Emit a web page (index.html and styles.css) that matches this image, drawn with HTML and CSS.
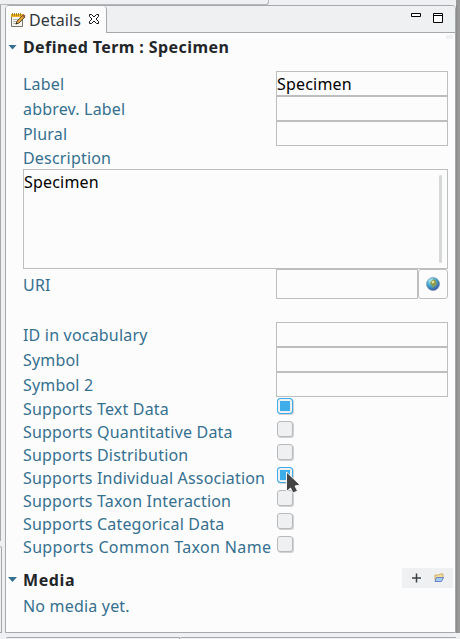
FILE: index.html
```html
<!DOCTYPE html>
<html lang="en">
<head>
<meta charset="utf-8">
<title>Details</title>
<link rel="stylesheet" href="styles.css">
</head>
<body>
<div class="workbench">
  <div class="top-edge"><span class="top-left"></span><span class="top-right"></span></div>
  <div class="middle">
    <div class="left-edge"><span class="edge-upper"></span><span class="edge-lower"></span></div>
    <section class="view">
      <header class="tabbar">
        <div class="tab">
          <svg class="tab-icon" width="16" height="16" viewBox="0 0 16 16">
            <path d="M1.500 3.500h11v11h-11z" fill="#f6f5ee" stroke="#77756c"/>
            <path d="M1 2h12v3H1z" fill="#efb51c"/>
            <path d="M2.500 1v3M4.500 1v3M6.500 1v3M8.500 1v3M10.500 1v3" stroke="#9a701c" stroke-width=".8"/>
            <path d="M3 7.500h7M3 9.500h5M3 11.500h3" stroke="#b9b9b5"/>
            <path d="M6 12l1-3 6-6 2 2-6 6z" fill="#dda63c" stroke="#54422c" stroke-width=".9"/>
            <path d="M12 3.500l1.500-1.500 2 2-1.500 1.500z" fill="#994c37"/>
            <path d="M5.500 12.500l1-2 1 1z" fill="#222"/>
          </svg>
          <span class="tab-title">Details</span>
          <svg class="tab-close" width="12" height="12" viewBox="0 0 12 12"><path d="M1.500 1.500h2l2.500 2.500 2.500-2.500h2v2L8 6l2.500 2.500v2h-2L6 8l-2.500 2.500h-2v-2L4 6 1.500 3.500z" fill="#fff" stroke="#16191b"/></svg>
        </div>
        <div class="window-buttons">
          <svg width="32" height="12" viewBox="0 0 32 12"><path d="M.5 1.500h9v3h-9zM22.500 1.500h9v9h-9zM22.500 3.500h9" fill="#fff" stroke="#000"/></svg>
        </div>
      </header>
      <main class="content">
        <span class="corner-mark"></span>
        <h2 class="section-title"><i class="twistie"></i>Defined Term : Specimen</h2>
        <form class="fields">
          <label class="row"><span>Label</span><span class="field">Specimen</span></label>
          <label class="row"><span>abbrev. Label</span><span class="field"></span></label>
          <label class="row"><span>Plural</span><span class="field"></span></label>
          <div class="description-label">Description</div>
          <div class="description">Specimen<span class="scrollbar"></span></div>
          <div class="row uri-row"><span>URI</span><span class="field"></span>
            <span class="globe-button"><svg width="14" height="14" viewBox="0 0 14 14">
              <defs><radialGradient id="sea" cx=".35" cy=".25" r=".8"><stop offset="0" stop-color="#b6f0f4"/><stop offset=".5" stop-color="#43a5cc"/><stop offset="1" stop-color="#3f4fa0"/></radialGradient></defs>
              <circle cx="7" cy="7" r="6.500" fill="url(#sea)" stroke="#5580a0" stroke-width=".5"/>
              <path d="M5 4l3-2 2 2 1 3-2 2-2 2-1-3-2-1z" fill="#8b9c50"/><path d="M5.500 4.500l2-1 1 2-2 1z" fill="#eee5a4"/>
            </svg></span>
          </div>
          <label class="row"><span>ID in vocabulary</span><span class="field"></span></label>
          <label class="row"><span>Symbol</span><span class="field"></span></label>
          <label class="row"><span>Symbol 2</span><span class="field"></span></label>
          <div class="check-row"><span>Supports Text Data</span><i class="check checked"></i></div>
          <div class="check-row"><span>Supports Quantitative Data</span><i class="check"></i></div>
          <div class="check-row"><span>Supports Distribution</span><i class="check"></i></div>
          <div class="check-row"><span>Supports Individual Association</span><i class="check checked"></i>
            <svg class="cursor" width="16" height="24" viewBox="0 0 16 24"><path d="M1.500 1v19.500l4-3.500 2.500 5 4.500-2-2.500-5 5-1z" fill="#434343" stroke="#f5f5f5" stroke-width="1"/></svg>
          </div>
          <div class="check-row"><span>Supports Taxon Interaction</span><i class="check"></i></div>
          <div class="check-row"><span>Supports Categorical Data</span><i class="check"></i></div>
          <div class="check-row"><span class="wide">Supports Common Taxon Name</span><i class="check"></i></div>
        </form>
        <div class="media-header">
          <h2 class="section-title">
            <i class="twistie"></i>Media</h2>
          <div class="media-tools">
            <svg width="51" height="20" viewBox="0 0 51 20">
              <path d="M10 10h9M14.500 5.500v9" stroke="#3c4043" stroke-width="1.500"/>
              <path d="M33 12V7h4l1-1h3v4" fill="#f5dfa0" stroke="#c59e51" stroke-width=".8"/>
              <path d="M34.500 9.500h7l-2 4h-6.500z" fill="#a5cdf2" stroke="#536fbd" stroke-width=".8"/>
            </svg>
          </div>
        </div>
        <p class="empty-note">No media yet.</p>
      </main>
    </section>
    <div class="right-edge"></div>
  </div>
  <div class="bottom-edge"><span></span><span></span></div>
</div>
</body>
</html>
```
FILE: styles.css
```css
* { box-sizing: border-box; }
body { margin: 0; background: #eff0f1; font: 16px/22px "Noto Sans", sans-serif; letter-spacing: .19px; color: #35708f; }
.workbench { width: 460px; height: 639px; display: flex; flex-direction: column; overflow: hidden; }
.top-edge { height: 5px; display: flex; }
.top-left { width: 269px; border-right: 1px solid #b4b6b8; border-bottom: 1px solid #b4b6b8; border-bottom-right-radius: 3px; }
.top-right { width: 187px; }
.top-edge::after { content: ""; flex: 1; background: #999; }
.middle { height: 628px; display: flex; }
.left-edge { width: 5px; display: flex; flex-direction: column; }
.edge-upper { width: 1px; height: 536px; background: #a5a8ac; }
.edge-lower { width: 2px; height: 87px; margin-top: 5px; border: 1px solid #a5a8ac; border-left: 0; border-radius: 0 3px 0 0; }
.view { width: 451px; border: 1px solid #a5a8ac; border-radius: 4px 4px 0 0; background: #fcfcfc; display: flex; flex-direction: column; }
.tabbar { height: 27px; flex: none; display: flex; justify-content: space-between; background: #eff0f1; border-bottom: 1px solid #a5a8ac; border-radius: 3px 3px 0 0; }
.tab { width: 101px; height: 27px; display: flex; align-items: center; background: #fcfcfc; border-right: 1px solid #a5a8ac; border-radius: 3px 4px 0 0; color: #31363b; padding: 0 0 0 4px; letter-spacing: .1px; }
.tab-title { margin: 1px 0 0 3px; }
.tab-close { margin: -2px 0 0 7px; }
.window-buttons { padding: 6px 12px 0 0; line-height: 0; }
.content { position: relative; padding: 3px 7px 0 2px; }
.corner-mark { position: absolute; right: 2px; top: 2px; width: 7px; height: 4px; background: #eff0f1; }
.section-title { margin: 0; font-size: 16px; line-height: 22px; letter-spacing: .41px; color: #232629; display: flex; align-items: center; }
.twistie { width: 9px; height: 5px; margin: 0 6px 0 0; background: #35708f; clip-path: polygon(0 0, 100% 0, 50% 100%); }
.fields { padding: 13px 0 0 15px; }
.row { height: 25px; display: grid; grid-template-columns: 253px 172px; grid-template-rows: 100%; line-height: 27px; }
.field { border: 1px solid #bcbebf; color: #000; line-height: 24px; }
.description-label { height: 23px; line-height: 24px; }
.description { position: relative; height: 100px; border: 1px solid #bcbebf; color: #000; line-height: 24px; }
.scrollbar { position: absolute; right: 5px; top: 5px; width: 3px; height: 88px; border-radius: 2px; background: #d6d7d7; }
.uri-row { height: 30px; grid-template-columns: 253px 142px 30px; line-height: 33px; margin-bottom: 23px; }
.globe-button { border: 1px solid #bcbebf; border-radius: 3px; display: flex; align-items: center; justify-content: center; }
.check-row { position: relative; height: 23px; line-height: 24px; display: grid; grid-template-columns: 254px 17px; white-space: nowrap; }
.wide { letter-spacing: .35px; }
.check { width: 16px; height: 16px; margin-top: 1px; border: 1px solid #b8babc; border-radius: 3px; background: #eff0f1; box-shadow: 1px 1px 0 #d1d2d3; }
.checked { border-color: #3daee9; background: #3daee9; box-shadow: inset 0 0 0 2px #eff0f1, 1px 1px 0 #d1d2d3; }
.cursor { position: absolute; left: 262px; top: 5px; z-index: 1; }
.media-header { display: flex; justify-content: space-between; margin-top: 10px; }
.media-header .section-title { height: 22px; padding-top: 1px; letter-spacing: .6px; }
.media-tools { width: 51px; height: 20px; margin: 0 -5px 0 0; background: #eff0f1; line-height: 0; }
.empty-note { margin: 5px 0 0 15px; }
.right-edge { width: 4px; background: linear-gradient(90deg, #858789, #999 2px, #9b9b9b); }
.bottom-edge { height: 6px; display: flex; padding: 4px 4px 0 6px; }
.bottom-edge span { border-top: 1px solid #a5a8ac; border-right: 1px solid #a5a8ac; width: 174px; border-radius: 3px 0 0 0; }
.bottom-edge span + span { flex: 1; border-right: 0; }
```
